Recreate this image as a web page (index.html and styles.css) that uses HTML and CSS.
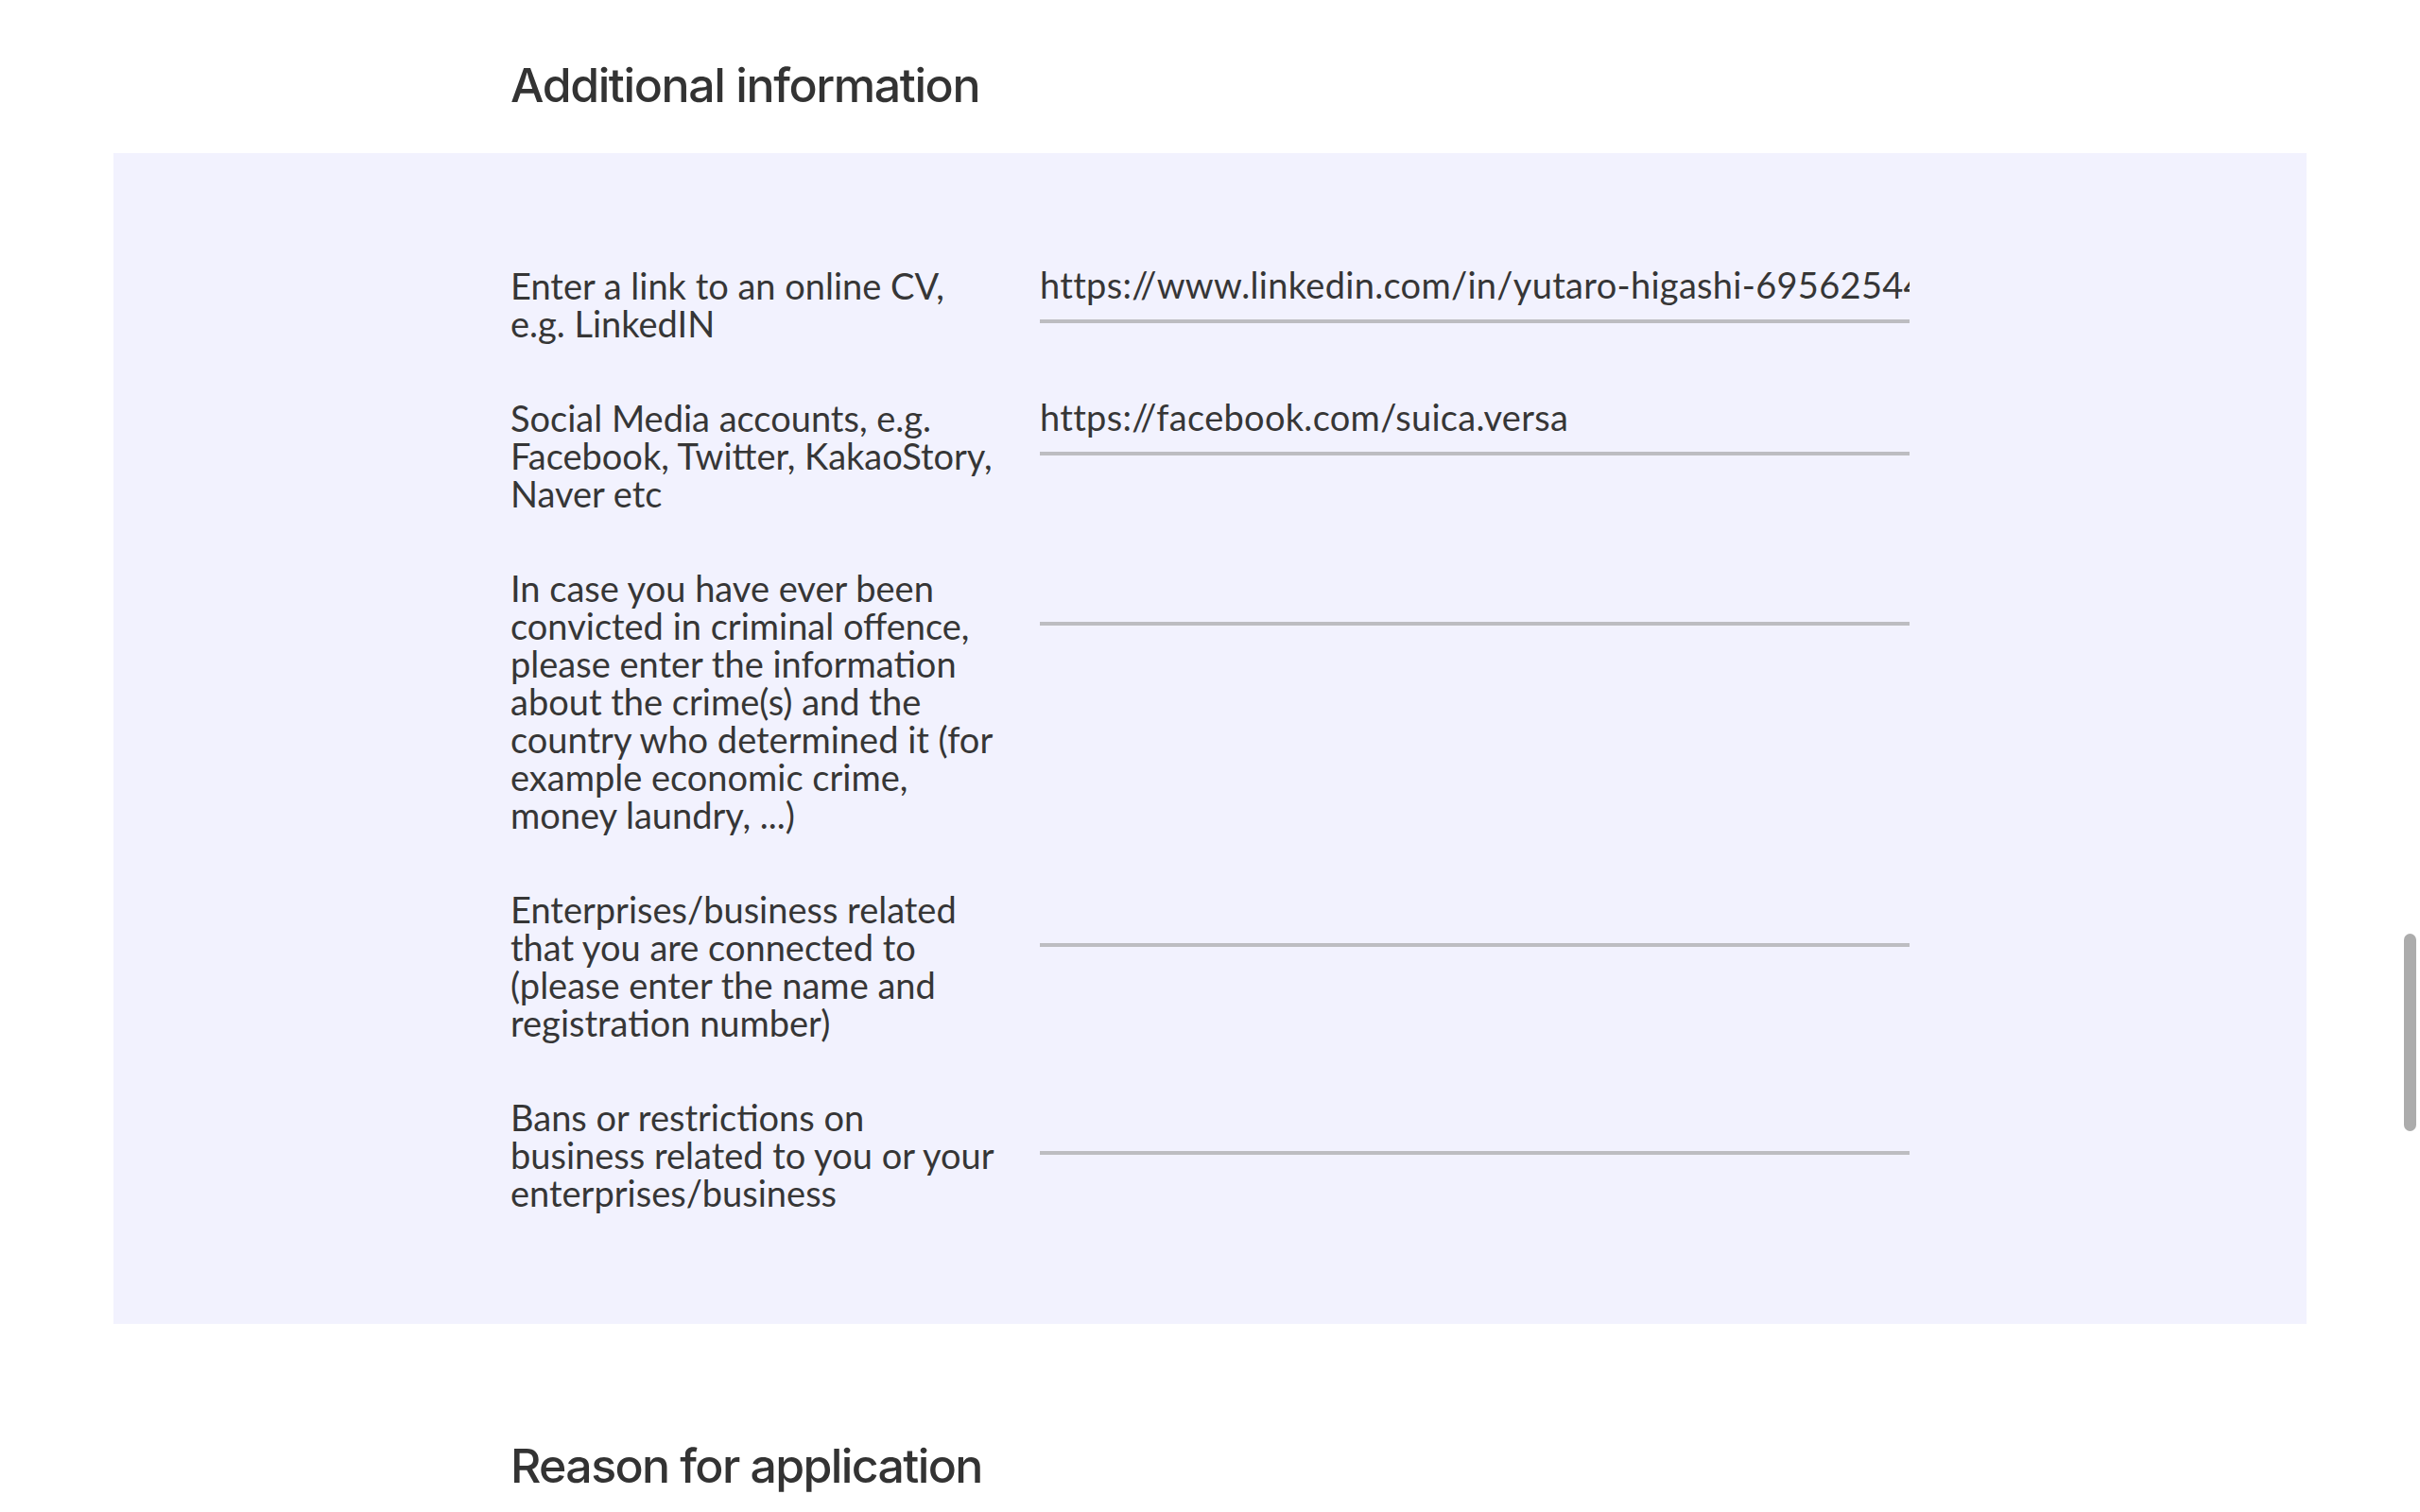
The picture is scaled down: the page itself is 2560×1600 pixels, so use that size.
FILE: index.html
```html
<!DOCTYPE html>
<html lang="en">
<head>
<meta charset="utf-8">
<title>Additional information</title>
<link rel="stylesheet" href="styles.css">
</head>
<body>
<main class="page">
  <section class="section">
    <div class="container">
      <h2 class="section-title">Additional information</h2>
    </div>
    <div class="panel">
      <form class="container form">
        <div class="row">
          <label class="label" for="cv">Enter a link to an online CV, e.g. LinkedIN</label>
          <input class="field" id="cv" type="text" value="https://www.linkedin.com/in/yutaro-higashi-69562544">
        </div>
        <div class="row">
          <label class="label" for="social">Social Media accounts, e.g. Facebook, Twitter, KakaoStory, Naver etc</label>
          <input class="field" id="social" type="text" value="https://facebook.com/suica.versa">
        </div>
        <div class="row">
          <label class="label" for="crime">In case you have ever been convicted in criminal offence, please enter the information about the crime(s) and the country who determined it (for example economic crime, money laundry, ...)</label>
          <input class="field" id="crime" type="text" value="">
        </div>
        <div class="row">
          <label class="label" for="enterprises">Enterprises/business related that you are connected to (please enter the name and registration number)</label>
          <input class="field" id="enterprises" type="text" value="">
        </div>
        <div class="row">
          <label class="label" for="bans">Bans or restrictions on business related to you or your enterprises/business</label>
          <input class="field" id="bans" type="text" value="">
        </div>
      </form>
    </div>
  </section>
  <section class="section section-next">
    <div class="container">
      <h2 class="section-title">Reason for application</h2>
    </div>
  </section>
</main>
<div class="scroll-thumb"></div>
</body>
</html>
```

FILE: styles.css
```css
html, body {
  margin: 0;
  padding: 0;
  background: #ffffff;
  overflow: hidden;
}

body {
  font-family: Lato, "Noto Sans", "Liberation Sans", sans-serif;
  color: #333333;
}

.page {
  padding-top: 60px;
}

.container {
  width: 1480px;
  margin: 0 auto;
}

.section-title {
  margin: 0 0 42px;
  font-family: Inter, "Liberation Sans", sans-serif;
  font-size: 50px;
  line-height: 60px;
  font-weight: 500;
  letter-spacing: -1.4px;
  color: #333333;
}

.section-next .section-title {
  margin-top: 120px;
  letter-spacing: -1.6px;
}

.panel {
  margin: 0 120px;
  background: #f2f2fe;
  padding: 120px 0 119px;
}

.form {
  display: flex;
  flex-direction: column;
  gap: 60px;
}

.row {
  display: grid;
  grid-template-columns: 516px 920px;
  column-gap: 44px;
  align-items: start;
}

.label {
  font-size: 38px;
  line-height: 40px;
  font-weight: 400;
  letter-spacing: 0;
  color: #363636;
}

.field {
  box-sizing: border-box;
  width: 100%;
  height: 60px;
  margin: 0;
  padding: 0 0 18px;
  border: 0;
  border-bottom: 4px solid #bdbdc1;
  border-radius: 0;
  background: transparent;
  font-family: inherit;
  font-size: 38px;
  line-height: 38px;
  letter-spacing: 0.3px;
  color: #363636;
  outline: none;
}

.scroll-thumb {
  position: fixed;
  right: 4px;
  top: 988px;
  width: 13px;
  height: 209px;
  border-radius: 7px;
  background: #acacac;
}
```
